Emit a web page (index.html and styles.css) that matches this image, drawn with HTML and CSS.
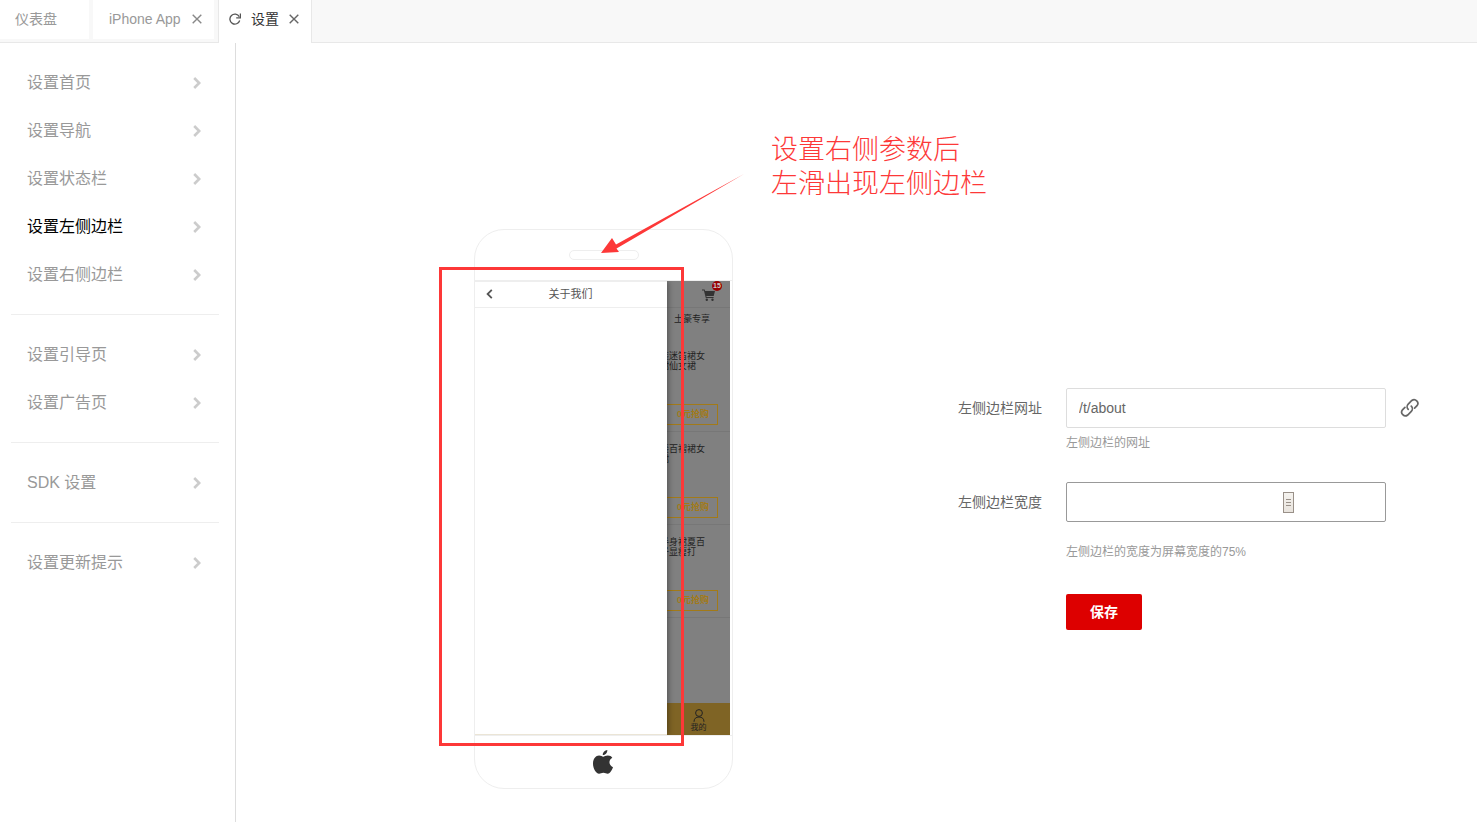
FILE: index.html
```html
<!DOCTYPE html>
<html lang="zh-CN">
<head>
<meta charset="utf-8">
<title>设置左侧边栏</title>
<link rel="stylesheet" href="styles.css">
</head>
<body>
<svg class="sprite" aria-hidden="true">
  <symbol id="chevron" viewBox="0 0 8 12"><path d="M1.2 1l5 5-5 5" fill="none" stroke="currentColor" stroke-width="2.6"/></symbol>
  <symbol id="close" viewBox="0 0 10 10"><path d="M.7.7l8.600 8.600M9.300.7L.7 9.300" fill="none" stroke="currentColor" stroke-width="1.400"/></symbol>
</svg>
<header class="tabs">
  <a class="tab tab-home" href="#home">仪表盘</a>
  <div class="tab tab-app"><a href="#app">iPhone App</a><button class="close" type="button" aria-label="关闭 iPhone App"><svg><use href="#close"/></svg></button></div>
  <div class="tab tab-current">
    <button class="reload" type="button" aria-label="刷新"><svg viewBox="0 0 12 12"><path d="M10.300 3.700A5 5 0 1 0 10.700 7.500" fill="none" stroke="currentColor" stroke-width="1.300"/><path d="M11.400.6v4.200H7.200" fill="none" stroke="currentColor" stroke-width="1.300"/></svg></button>
    <a href="#settings">设置</a><button class="close" type="button" aria-label="关闭设置"><svg><use href="#close"/></svg></button>
  </div>
</header>
<div class="layout">
  <nav class="sidebar">
    <a class="item" href="#1">设置首页<svg><use href="#chevron"/></svg></a>
    <a class="item" href="#2">设置导航<svg><use href="#chevron"/></svg></a>
    <a class="item" href="#3">设置状态栏<svg><use href="#chevron"/></svg></a>
    <a class="item item-active" href="#4">设置左侧边栏<svg><use href="#chevron"/></svg></a>
    <a class="item" href="#5">设置右侧边栏<svg><use href="#chevron"/></svg></a>
    <hr>
    <a class="item" href="#6">设置引导页<svg><use href="#chevron"/></svg></a>
    <a class="item" href="#7">设置广告页<svg><use href="#chevron"/></svg></a>
    <hr>
    <a class="item" href="#8">SDK 设置<svg><use href="#chevron"/></svg></a>
    <hr>
    <a class="item" href="#9">设置更新提示<svg><use href="#chevron"/></svg></a>
  </nav>
  <main class="content">
    <section class="phone">
      <div class="phone-top"><span class="speaker"></span></div>
      <div class="screen">
        <div class="drawer">
          <div class="drawer-bar">
            <svg class="back" viewBox="0 0 7 10"><path d="M5.800.8L1.600 5l4.200 4.200" fill="none" stroke="#555" stroke-width="1.800"/></svg>
            <span class="drawer-title">关于我们</span>
          </div>
        </div>
        <div class="shop">
          <div class="shop-bar">
            <svg class="cart" viewBox="0 0 13 12"><path d="M0 .4h2.600l.5 1.600H13l-1.300 5H4.300l.3 1.100h7v1H3.800L1.900 1.400H0z" fill="#333"/><circle cx="4.800" cy="10.700" r="1.200" fill="#333"/><circle cx="10.500" cy="10.700" r="1.200" fill="#333"/></svg>
            <span class="badge">15</span>
          </div>
          <div class="category">土豪专享</div>
          <div class="product"><div class="name">装迷笛裙女<br>裙仙女裙</div><div class="buy">0元抢购</div></div>
          <div class="product"><div class="name">接百褶裙女<br>裙</div><div class="buy">0元抢购</div></div>
          <div class="product"><div class="name">半身裙夏百<br>子显瘦打</div><div class="buy">0元抢购</div></div>
          <div class="mine">
            <svg class="user" viewBox="0 0 12 13"><circle cx="6" cy="4" r="3.400" fill="none" stroke="currentColor"/><path d="M1 12.800C1 9.600 3 8 6 8s5 1.600 5 4.800" fill="none" stroke="currentColor"/></svg>
            <span>我的</span>
          </div>
        </div>
      </div>
      <div class="phone-bottom">
        <svg class="apple" viewBox="0 0 20 24"><path d="M14.300 0c.3 2.500-2 5.200-4.500 5.100C9.500 2.700 11.900.2 14.300 0zM10.200 6.700c.9 0 2.500-1.200 4.700-1.200 1.900 0 3.500.9 4.400 2.300-4.200 2.400-3.500 7.800.7 9.400-.9 2.300-2.700 6.500-5.300 6.500-1.600 0-2.300-1-4.300-1s-2.800 1-4.300 1C3 23.700 0 18.500 0 13.700c0-5.200 3-8.200 6-8.200 2 0 3.300 1.200 4.200 1.200z" fill="#333"/></svg>
      </div>
      <div class="frame"></div>
      <svg class="arrow" viewBox="0 0 144 80"><path d="M143 0L15 70.500 11 64 0 79l18-1-2.500-3.500z" fill="#fd3838"/></svg>
      <p class="note">设置右侧参数后<br>左滑出现左侧边栏</p>
    </section>
    <form class="form">
      <label class="label" for="url">左侧边栏网址</label>
      <input class="box" id="url" type="text" value="/t/about">
      <button class="link" type="button" aria-label="选择链接"><svg viewBox="0 0 20 20" fill="none" stroke="currentColor" stroke-width="1.700" stroke-linecap="round"><path d="M8.200 11.300a3.700 3.700 0 0 1 0-5.200l3.600-3.600a3.700 3.700 0 0 1 5.200 5.200l-2.400 2.400"/><path d="M11.300 8.200a3.700 3.700 0 0 1 0 5.200l-3.600 3.600a3.700 3.700 0 0 1-5.200-5.200l2.400-2.400"/></svg></button>
      <p class="help help-url">左侧边栏的网址</p>
      <label class="label" for="width">左侧边栏宽度</label>
      <input class="box range" id="width" type="range" min="0" max="100" value="72">
      <p class="help help-width">左侧边栏的宽度为屏幕宽度的75%</p>
      <button class="save" type="submit">保存</button>
    </form>
  </main>
</div>
</body>
</html>
```
FILE: styles.css
```css
* { box-sizing: border-box; }
body {
  margin: 0;
  min-height: 100vh;
  display: flex;
  flex-direction: column;
  background: #fff;
  color: #666;
  font: 14px/20px "Liberation Sans", "Noto Sans CJK SC", sans-serif;
}
a { color: inherit; text-decoration: none; }
p { margin: 0; }
button { padding: 0; border: 0; background: none; color: inherit; font: inherit; cursor: pointer; }
svg { display: block; }
.sprite { position: absolute; width: 0; height: 0; }

.tabs { display: flex; height: 43px; background: #f8f8f8; border-bottom: 1px solid #e8e8e8; }
.tab { display: flex; align-items: center; height: 39px; padding-bottom: 2px; background: #fff; color: #999; }
.tab-home { width: 89px; padding-left: 15px; margin-right: 4px; }
.tab-app { width: 121px; padding-left: 16px; gap: 11px; margin-right: 4px; }
.tab-current { width: 94px; height: 43px; padding: 0 0 6px 10px; gap: 10px; color: #333; border: solid #e8e8e8; border-width: 0 1px; }
.close { color: #666; }
.tab-app .close { color: #888; }
.close svg { width: 10px; height: 10px; }
.reload { color: #555; }
.reload svg { width: 12px; height: 12px; }

.layout { display: flex; flex: 1; }
.sidebar { flex: none; width: 236px; padding: 16px 16px 0 11px; border-right: 1px solid #ddd; }
.item { display: flex; align-items: center; justify-content: space-between; height: 48px; padding: 0 18px 0 16px; font-size: 16px; color: #999; }
.item svg { width: 8px; height: 12px; color: #ccc; }
.item-active { color: #000; }
.sidebar hr { margin: 15px 0 16px; border: 0; border-top: 1px solid #eee; }

.content { flex: 1; display: flex; align-items: center; align-self: flex-start; justify-content: space-between; padding: 186px 57px 33px 238px; }

.phone { position: relative; flex: none; width: 259px; border: 1px solid #eee; border-radius: 30px; }
.phone-top { display: flex; justify-content: center; padding: 20px 0; }
.speaker { width: 70px; height: 10px; border: 1px solid #eee; border-radius: 5px; }
.screen { display: flex; height: 456px; border: solid #eee; border-width: 1px 0; }
.drawer { position: relative; z-index: 1; width: 192px; background: #fff; border-top: 1px solid #eee; border-bottom: 1px solid #ebe5d6; box-shadow: 1px 0 6px rgba(0, 0, 0, .4); clip-path: inset(0 -8px 0 0); }
.drawer-bar { display: flex; align-items: center; height: 26px; padding: 0 0 1px 11px; border-bottom: 1px solid #eee; }
.back { width: 7px; height: 10px; }
.drawer-title { flex: 1; padding-right: 19px; text-align: center; font-size: 11px; line-height: 16px; color: #555; }
.phone-bottom { display: flex; justify-content: center; padding: 14px 1px 14px 0; }
.apple { width: 20px; height: 24px; }

.shop { display: flex; flex-direction: column; width: 63px; overflow: hidden; background: #808080; color: #222; font-size: 9px; line-height: 10px; }
.shop-bar { position: relative; flex: none; height: 27px; padding: 8px 0 0 35px; border-bottom: 1px solid #777; }
.cart { width: 13px; height: 12px; }
.badge { position: absolute; left: 45px; top: 0; width: 10px; height: 10px; border-radius: 5px; background: #900; color: #ccc; font-size: 7px; font-weight: bold; text-align: center; }
.category { flex: none; height: 31px; padding-left: 7px; line-height: 22px; white-space: nowrap; }
.product { flex: none; padding: 12px 0 6px; border-bottom: 1px solid #777; }
.name { margin-left: -7px; height: 20px; white-space: nowrap; }
.buy { width: 52px; height: 21px; margin: 33px 0 0 -1px; padding-left: 10px; border: 1px solid #a27a18; color: #a27a18; font-weight: bold; line-height: 19px; white-space: nowrap; }
.mine { display: flex; flex-direction: column; align-items: center; height: 32px; margin-top: auto; padding-top: 6px; background: #7f6425; font-size: 8px; }
.user { width: 12px; height: 13px; margin-bottom: 1px; }

.frame { position: absolute; z-index: 2; left: -36px; top: 37px; width: 245px; height: 479px; border: 3px solid #fd3838; }
.arrow { position: absolute; z-index: 2; left: 126px; top: -56px; width: 144px; height: 80px; }
.note { position: absolute; left: 296px; top: -97px; color: #fd3838; font-size: 27px; font-weight: 300; line-height: 34px; white-space: nowrap; }

.form { display: grid; grid-template-columns: 108px 334px 20px; align-items: center; }
.label { grid-column: 1; }
.box { grid-column: 2; width: 320px; height: 40px; margin: 0; padding: 0 12px; border: 1px solid #ddd; border-radius: 2px; background: #fff; color: #666; font: inherit; outline: 0; }
.link svg { width: 20px; height: 20px; }
.help { grid-column: 2; font-size: 12px; line-height: 18px; color: #999; }
.help-url { margin: 6px 0 30px; }
.help-width { margin: 21px 0 33px; }
.range { appearance: none; border-color: #999; }
.range::-webkit-slider-thumb {
  appearance: none;
  width: 11px;
  height: 21px;
  border: 1px solid #999088;
  background:
    linear-gradient(#999088, #999088) center 6px / 5px 1px no-repeat,
    linear-gradient(#999088, #999088) center 9px / 5px 1px no-repeat,
    linear-gradient(#999088, #999088) center 12px / 5px 1px no-repeat,
    linear-gradient(#f5f3ef, #e8e3dd);
}
.save { grid-column: 2; width: 76px; height: 36px; border-radius: 2px; background: #d00; color: #fff; font-weight: bold; }
```
